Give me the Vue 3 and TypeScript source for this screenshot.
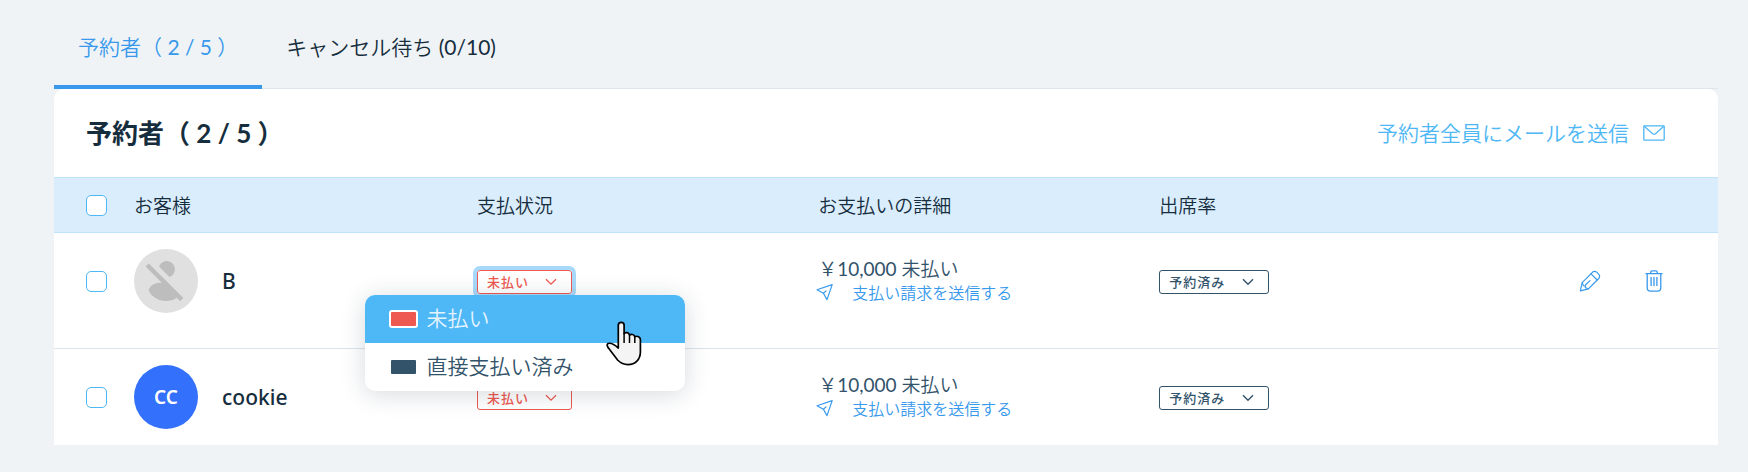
<script setup lang="ts">
import { ref } from 'vue'

interface Booking {
  id: number
  name: string
  initials: string
  price: string
}

interface PaymentOption {
  label: string
  tone: 'red' | 'navy'
}

const tabs: string[] = ['予約者（ 2 / 5 ）', 'キャンセル待ち (0/10)']
const activeTab = ref(0)

const bookings: Booking[] = [
  { id: 1, name: 'B', initials: '', price: '￥10,000 未払い' },
  { id: 2, name: 'cookie', initials: 'CC', price: '￥10,000 未払い' },
]

const paymentOptions: PaymentOption[] = [
  { label: '未払い', tone: 'red' },
  { label: '直接支払い済み', tone: 'navy' },
]

const openMenu = ref<number | null>(1)
const highlighted = ref(0)

function toggleMenu(id: number): void {
  openMenu.value = openMenu.value === id ? null : id
}
</script>

<template>
  <main class="page">
    <nav class="tabs" role="tablist">
      <button
        v-for="(tab, i) in tabs"
        :key="tab"
        type="button"
        role="tab"
        class="tab"
        :class="{ active: activeTab === i }"
        :aria-selected="activeTab === i"
        @click="activeTab = i"
      >{{ tab }}</button>
    </nav>

    <section class="card">
      <header class="card-head">
        <h1>予約者（ 2 / 5 ）</h1>
        <a href="#mail" class="mail-all">
          <span>予約者全員にメールを送信</span>
          <svg width="22" height="16" viewBox="0 0 22 16" fill="none" stroke="currentColor" stroke-width="1.3">
            <rect x=".8" y=".8" width="20.4" height="14.4" rx=".8" />
            <path d="M1.2 1.2 9.6 8.7q1.4 1 2.8 0L20.8 1.2" />
          </svg>
        </a>
      </header>

      <table>
        <colgroup>
          <col class="col-check" />
          <col class="col-data" />
          <col class="col-data" />
          <col class="col-data" />
          <col class="col-data" />
          <col />
        </colgroup>
        <thead>
          <tr>
            <th class="check-cell"><input type="checkbox" aria-label="すべて選択" /></th>
            <th class="customer-cell">お客様</th>
            <th>支払状況</th>
            <th>お支払いの詳細</th>
            <th>出席率</th>
            <th></th>
          </tr>
        </thead>
        <tbody>
          <tr v-for="b in bookings" :key="b.id">
            <td class="check-cell"><input type="checkbox" :aria-label="b.name" /></td>
            <td class="customer-cell">
              <div class="customer">
                <span v-if="b.initials" class="avatar filled">{{ b.initials }}</span>
                <span v-else class="avatar">
                  <svg width="64" height="64" viewBox="0 0 64 64">
                    <g fill="#bdbdbd">
                      <path d="M25 17.5A8.2 8.2 0 1 1 35.5 28Z" />
                      <path d="M14.5 41C17 35.5 22.5 33 29 34L43 48.7C34 54.5 20 53 14.5 41Z" />
                      <path d="M14.8 14.4 49.4 49 46.2 52.2 11.6 17.6Z" />
                    </g>
                  </svg>
                </span>
                <span>{{ b.name }}</span>
              </div>
            </td>
            <td>
              <div class="status">
                <button
                  type="button"
                  class="badge red"
                  :class="{ focused: openMenu === b.id }"
                  aria-haspopup="listbox"
                  :aria-expanded="openMenu === b.id"
                  @click="toggleMenu(b.id)"
                >
                  <span>未払い</span>
                  <svg width="12" height="8" viewBox="0 0 12 8" fill="none" stroke="currentColor" stroke-width="1.3">
                    <path d="M1 1.2 6 6.2 11 1.2" />
                  </svg>
                </button>
                <ul v-if="openMenu === b.id" class="menu" role="listbox" aria-label="支払状況">
                  <li
                    v-for="(option, i) in paymentOptions"
                    :key="option.label"
                    role="option"
                    class="option"
                    :class="{ highlighted: highlighted === i }"
                    :aria-selected="highlighted === i"
                    @mouseenter="highlighted = i"
                  >
                    <span class="swatch" :class="option.tone"></span>
                    <span>{{ option.label }}</span>
                  </li>
                  <svg class="pointer" width="36" height="45" viewBox="0 0 36 45" aria-hidden="true">
                    <path
                      d="M12.3 27V4.3a2.9 2.9 0 0 1 5.8 0v8.2c1.6-1.6 4.8-1.2 5.4 1.6 1.7-1.3 4.7-.7 5.3 1.6 2.6-1.2 5.6.2 5.6 3.1V31c0 7.5-5.2 12.6-12.4 12.6-5 0-7.8-2-10.4-4.6L3.4 28.2C1 25.8.6 23.4 2 22.6c2.6-1.2 6.3.8 10.3 4.4Z"
                      fill="#f4f4f4" stroke="#000" stroke-width="1.7" stroke-linejoin="round"
                    />
                    <path d="M18.1 12V22M23.5 14V22M28.8 15.5V22" fill="none" stroke="#000" stroke-width="1.5" />
                  </svg>
                </ul>
              </div>
            </td>
            <td>
              <div class="details">
                <span class="price">{{ b.price }}</span>
                <a href="#request" class="request">
                  <svg width="18" height="18" viewBox="0 0 18 18" fill="none" stroke="currentColor" stroke-width="1.2" stroke-linejoin="round">
                    <path d="M1 6.8 16.2 1.6 11 16.6 7.4 10.2Z" />
                    <path d="M7.4 10.2 10.4 7.6" />
                  </svg>
                  <span>支払い請求を送信する</span>
                </a>
              </div>
            </td>
            <td>
              <div class="attendance">
                <select class="badge navy" aria-label="出席率">
                  <option>予約済み</option>
                </select>
                <svg width="12" height="8" viewBox="0 0 12 8" fill="none" stroke="currentColor" stroke-width="1.4">
                  <path d="M1 1.2 6 6.2 11 1.2" />
                </svg>
              </div>
            </td>
            <td class="actions-cell">
              <div v-if="b.id === 1" class="actions">
                <button type="button" aria-label="編集">
                  <svg width="22" height="22" viewBox="0 0 22 22" fill="none" stroke="currentColor" stroke-width="1.2" stroke-linejoin="round" stroke-linecap="round">
                    <path d="M1.3 20.8 3.2 12.6 13.4 2.3Q15.6.3 18 2.4L19.4 3.8Q21.7 6.2 19.7 8.5L9.4 18.8Z" />
                    <path d="M12 3.8 18.2 10M3.2 12.6 4.4 15.6 6.2 15.8 6.5 17.8 9.4 18.8M6.6 14.8 11 10.6" />
                  </svg>
                </button>
                <button type="button" aria-label="削除">
                  <svg width="18" height="22" viewBox="0 0 18 22" fill="none" stroke="currentColor" stroke-width="1.3">
                    <path d="M.5 3.7H17.5M5.7 3.6V2.4Q5.7.9 7.2.9H10.8Q12.3.9 12.3 2.4V3.6M2.2 3.7V17.8Q2.2 21.2 5.4 21.2H12.6Q15.8 21.2 15.8 17.8V3.7" />
                    <path d="M6.1 7V16M9 7V16M11.9 7V16" />
                  </svg>
                </button>
              </div>
            </td>
          </tr>
        </tbody>
      </table>
    </section>
  </main>
</template>

<style>
html,
body {
  background: #eff3f6;
}
</style>

<style scoped>
.page {
  --navy: #162d3d;
  --slate: #32536a;
  --blue: #3899ec;
  --red: #ee5951;
  padding: 0 30px 27px 54px;
  color: var(--navy);
  font-family: Lato, 'Noto Sans CJK JP DemiLight', 'Noto Sans CJK JP', sans-serif;
  font-weight: 400;
}

button,
select {
  font-family: inherit;
}

.tabs {
  display: flex;
  height: 89px;
  box-sizing: border-box;
  border-bottom: 1px solid #dfe5eb;
}

.tab {
  height: 89px;
  box-sizing: border-box;
  padding: 13px 24px 7px;
  border: 0;
  border-bottom: 4px solid transparent;
  background: none;
  color: var(--navy);
  font-size: 21px;
  font-weight: 400;
  white-space: nowrap;
}

.tab.active {
  border-bottom-color: var(--blue);
  color: var(--blue);
}

.card {
  background: #fff;
  border-radius: 10px 10px 0 0;
}

.card-head {
  display: flex;
  align-items: center;
  justify-content: space-between;
  height: 88px;
  padding: 0 53px 0 32px;
}

h1 {
  margin: 0;
  padding-bottom: 4px;
  font-family: Lato, 'Noto Sans CJK JP', sans-serif;
  font-size: 26px;
  font-weight: 700;
}

.mail-all {
  display: flex;
  align-items: center;
  gap: 14px;
  color: #4eb7f5;
  font-size: 21px;
  text-decoration: none;
}

.mail-all span {
  padding-bottom: 2px;
}

table {
  width: 100%;
  table-layout: fixed;
  border-collapse: separate;
  border-spacing: 0;
}

.col-check {
  width: 80px;
}

.col-data {
  width: 20.5%;
}

th,
td {
  padding: 0 0 0 2px;
  text-align: left;
}

th {
  height: 52px;
  padding-bottom: 2px;
  border: solid #bfe1fa;
  border-width: 1px 0;
  background: #daedfd;
  font-size: 19px;
  font-weight: 400;
}

th.check-cell {
  padding-bottom: 0;
}

td {
  padding-top: 16px;
  padding-bottom: 16px;
}

tbody tr:not(:last-child) td {
  padding-bottom: 35px;
  border-bottom: 1px solid #dce3eb;
}

.check-cell {
  padding-left: 32px;
}

.customer-cell {
  padding-left: 0;
}

input {
  display: block;
  width: 21px;
  height: 21px;
  margin: 0;
  appearance: none;
  border: 1px solid #4eb7f5;
  border-radius: 5px;
  background: #fff;
}

.customer {
  display: flex;
  align-items: center;
  gap: 24px;
  font-family: 'Noto Sans', 'Noto Sans CJK JP', sans-serif;
  font-size: 21px;
  font-weight: 500;
}

.avatar {
  display: flex;
  align-items: center;
  justify-content: center;
  width: 64px;
  height: 64px;
  border-radius: 50%;
  background: #e0e0e0;
  overflow: hidden;
}

.avatar.filled {
  background: #3370fb;
  color: #fff;
  font-size: 19px;
  font-weight: 600;
}

.status,
.attendance {
  position: relative;
  width: max-content;
  padding-top: 2px;
}

.badge {
  display: flex;
  align-items: center;
  gap: 16px;
  height: 24px;
  box-sizing: border-box;
  padding: 0 14px 1px 9px;
  border: 1px solid currentColor;
  border-radius: 3px;
  background: #fff;
  font-family: 'Noto Sans CJK JP', sans-serif;
  font-size: 13px;
  font-weight: 500;
  letter-spacing: 1px;
}

.red {
  color: var(--red);
}

.badge.focused {
  outline: 4px solid #a7d9fa;
}

.attendance {
  color: var(--slate);
}

.attendance select {
  appearance: none;
  padding-right: 42px;
  color: inherit;
}

.attendance svg {
  position: absolute;
  right: 15px;
  top: 10px;
  pointer-events: none;
}

.menu {
  position: absolute;
  z-index: 2;
  top: 100%;
  left: 50%;
  transform: translateX(-50%);
  width: 320px;
  margin: 1px 0 0;
  padding: 0;
  border-radius: 10px;
  background: #fff;
  box-shadow: 0 3px 24px rgba(22, 45, 61, 0.18);
  color: var(--slate);
  font-size: 21px;
  list-style: none;
}

.option {
  display: flex;
  align-items: center;
  gap: 9px;
  height: 48px;
  box-sizing: border-box;
  padding: 0 0 1px 24px;
}

.option span:last-child {
  padding-bottom: 3px;
}

.option.highlighted {
  border-radius: 10px 10px 0 0;
  background: #4eb7f5;
  color: #e4f4ff;
}

.swatch {
  box-sizing: border-box;
  width: 29px;
  height: 18px;
  border: 2px solid #fff;
  border-radius: 3px;
}

.swatch.red {
  background: var(--red);
}

.swatch.navy {
  background: var(--slate);
}

.pointer {
  position: absolute;
  top: 26px;
  left: 241px;
}

.details {
  display: flex;
  flex-direction: column;
}

.price {
  height: 24px;
  color: var(--slate);
  font-size: 19px;
  line-height: 24px;
}

.request {
  display: flex;
  align-items: center;
  gap: 18px;
  height: 22px;
  padding-bottom: 2px;
  margin-left: -2px;
  color: var(--blue);
  font-size: 16px;
  text-decoration: none;
  white-space: nowrap;
}

.actions {
  display: flex;
  align-items: center;
  justify-content: flex-end;
  gap: 44px;
  padding-right: 55px;
}

.actions button {
  padding: 0;
  border: 0;
  background: none;
  color: var(--blue);
}

.actions svg {
  display: block;
}
</style>
